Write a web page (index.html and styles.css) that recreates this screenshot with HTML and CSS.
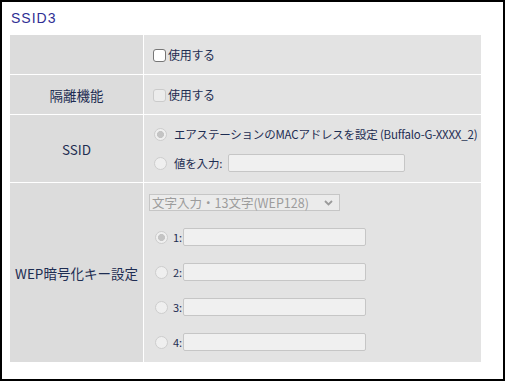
FILE: index.html
```html
<!DOCTYPE html>
<html lang="ja">
<head>
<meta charset="utf-8">
<link rel="stylesheet" href="styles.css">
</head>
<body>
<div class="frame">
  <h2 class="title">SSID3</h2>
  <div class="grid">
    <div class="label r1"></div>
    <div class="value r1 pad-chk">
      <label class="opt"><input type="checkbox" class="chk"><span class="chk-text">使用する</span></label>
    </div>

    <div class="label r2">隔離機能</div>
    <div class="value r2 pad-chk">
      <label class="opt"><input type="checkbox" class="chk" disabled><span class="chk-text">使用する</span></label>
    </div>

    <div class="label r3">SSID</div>
    <div class="value r3 ssid">
      <label class="opt line"><input type="radio" name="ssid" class="rad" checked disabled><span class="rad-text">エアステーションのMACアドレスを設定 (Buffalo-G-XXXX_2)</span></label>
      <label class="opt line"><input type="radio" name="ssid" class="rad" disabled><span class="rad-text">値を入力:</span><input type="text" class="txt ssid-txt" disabled></label>
    </div>

    <div class="label r4">WEP暗号化キー設定</div>
    <div class="value r4 wep">
      <div class="sel">
        <span class="sel-text">文字入力・13文字(WEP128)</span>
        <svg class="chev" width="9" height="6" viewBox="0 0 9 6"><path d="M1 1 L4.5 4.5 L8 1" fill="none" stroke="#9a9a9a" stroke-width="1.8"/></svg>
      </div>
      <label class="opt key"><input type="radio" name="key" class="rad" checked disabled><span class="key-num">1:</span><input type="text" class="txt key-txt" disabled></label>
      <label class="opt key"><input type="radio" name="key" class="rad" disabled><span class="key-num">2:</span><input type="text" class="txt key-txt" disabled></label>
      <label class="opt key"><input type="radio" name="key" class="rad" disabled><span class="key-num">3:</span><input type="text" class="txt key-txt" disabled></label>
      <label class="opt key"><input type="radio" name="key" class="rad" disabled><span class="key-num">4:</span><input type="text" class="txt key-txt" disabled></label>
    </div>
  </div>
</div>
</body>
</html>
```

FILE: styles.css
```css
html, body {
  margin: 0;
  padding: 0;
  background: #ffffff;
}
body {
  font-family: "Noto Sans CJK JP", "Liberation Sans", sans-serif;
  font-size: 12px;
  color: #1e2d52;
}
.frame {
  box-sizing: border-box;
  width: 505px;
  height: 381px;
  border: 2px solid #000;
  padding: 0 0 0 8px;
  background: #fff;
}
.title {
  margin: 0;
  height: 33px;
  box-sizing: border-box;
  padding: 7px 0 0 1px;
  font-family: "Liberation Sans", sans-serif;
  font-size: 14px;
  font-weight: normal;
  letter-spacing: 1px;
  line-height: 18px;
  color: #2f2f94;
}
.grid {
  display: grid;
  grid-template-columns: 133px 337px;
  grid-template-rows: 39px 39px 67px 179px;
  gap: 1px;
  width: 471px;
  background: #fff;
}
.label {
  background: #dcdcdc;
  display: flex;
  align-items: center;
  justify-content: center;
  font-size: 13.5px;
  color: #1e2d52;
}
.value {
  background: #e3e3e3;
  display: flex;
  flex-direction: column;
  justify-content: center;
}
.pad-chk {
  padding-left: 9px;
}
.opt {
  display: flex;
  align-items: center;
}
.chk {
  appearance: none;
  -webkit-appearance: none;
  margin: 1px 0 0 0;
  width: 13px;
  height: 13px;
  box-sizing: border-box;
  border: 1px solid #767676;
  border-radius: 3px;
  background: #fff;
}
.chk:disabled {
  border-color: #cbcbcb;
  background: #ececec;
}
.chk-text {
  margin-left: 2px;
  letter-spacing: -0.3px;
}
.rad {
  appearance: none;
  -webkit-appearance: none;
  margin: 0;
  width: 13px;
  height: 13px;
  box-sizing: border-box;
  border: 1px solid #cdcdcd;
  border-radius: 50%;
  background: #efefef;
  flex: none;
}
.rad:checked {
  background: radial-gradient(circle, #c4c4c4 0, #c4c4c4 3.2px, #efefef 3.8px);
}
.ssid {
  padding: 10px 0 10px 10px;
  justify-content: flex-start;
  gap: 11px;
}
.line {
  height: 18px;
}
.rad-text {
  margin-left: 7px;
  font-size: 11.5px;
  letter-spacing: -0.2px;
  white-space: nowrap;
}
.txt {
  box-sizing: border-box;
  height: 18px;
  margin: 0;
  padding: 0 3px;
  border: 1px solid #c6c6c6;
  border-radius: 2px;
  background: #f0f0f0;
}
.ssid-txt {
  width: 177px;
  margin-left: 6px;
}
.wep {
  padding: 11px 0 11px 5px;
  justify-content: flex-start;
  gap: 17px;
}
.sel {
  box-sizing: border-box;
  width: 191px;
  height: 17px;
  border: 1px solid #c6c6c6;
  background: #ebebeb;
  display: flex;
  align-items: center;
  justify-content: space-between;
  padding: 0 6px 0 2px;
  color: #9c9c9c;
  font-size: 12.5px;
}
.sel-text {
  white-space: nowrap;
  letter-spacing: 0;
}
.chev {
  display: block;
}
.key {
  height: 18px;
  padding-left: 6px;
}
.key-num {
  margin-left: 5px;
  width: 10px;
  font-size: 11px;
}
.key-txt {
  width: 183px;
  margin-left: 0;
}
```
